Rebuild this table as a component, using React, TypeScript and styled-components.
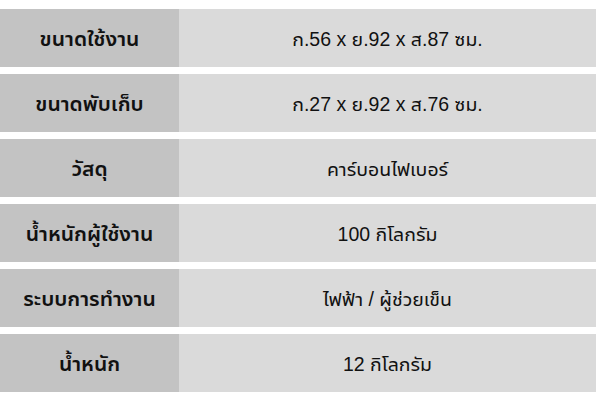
import styled, { createGlobalStyle } from "styled-components"

const GlobalStyle = createGlobalStyle`
    body{
        margin:0;
        background:#fff;
        font-family:"Liberation Sans", "Noto Sans Thai UI", "Kanit", "Prompt", "Loma", "Noto Sans Thai", "Noto Sans", sans-serif;
    }
`

const specs = [
    { label: "ขนาดใช้งาน", value: "ก.56 x ย.92 x ส.87 ซม." },
    { label: "ขนาดพับเก็บ", value: "ก.27 x ย.92 x ส.76 ซม." },
    { label: "วัสดุ", value: "คาร์บอนไฟเบอร์" },
    { label: "น้ำหนักผู้ใช้งาน", value: "100 กิโลกรัม" },
    { label: "ระบบการทำงาน", value: "ไฟฟ้า / ผู้ช่วยเข็น" },
    { label: "น้ำหนัก", value: "12 กิโลกรัม" },
]

export default function App() {
    return (
        <>
            <GlobalStyle />
            <SpecTable>
                {specs.map(spec => (
                    <Row key={spec.label}>
                        <Label>{spec.label}</Label>
                        <Value>{spec.value}</Value>
                    </Row>
                ))}
            </SpecTable>
        </>
    )
}

const SpecTable = styled.div`
    width:596px;
    padding-top:9px;
    display:flex;
    flex-direction:column;
    gap:7px;
`
const Row = styled.div`
    display:grid;
    grid-template-columns:179px 1fr;
    height:58px;
    background:#dadada;
`
const Label = styled.div`
    background:#c3c3c3;
    display:flex;
    align-items:center;
    justify-content:center;
    font-size:21px;
    font-weight:600;
    color:#111;
`
const Value = styled.div`
    display:flex;
    align-items:center;
    justify-content:center;
    font-size:19.5px;
    color:#111;
`
